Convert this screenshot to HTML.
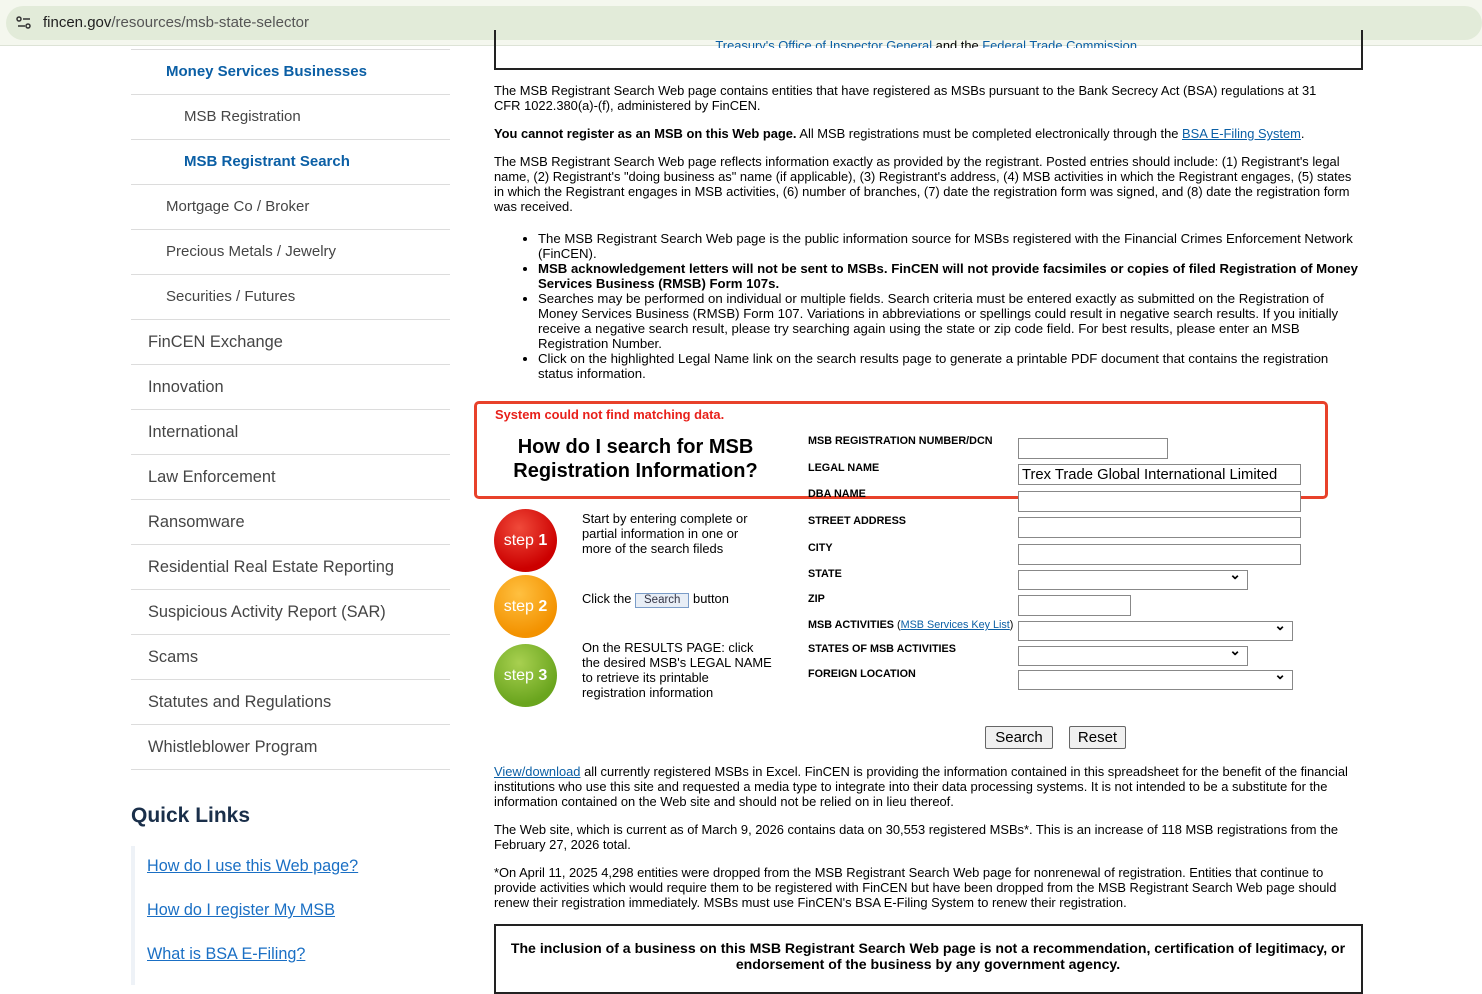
<!DOCTYPE html>
<html><head><meta charset="utf-8"><style>
*{box-sizing:border-box;margin:0;padding:0}
body{width:1482px;height:985px;overflow:hidden;background:#fff;font-family:"Liberation Sans",Arial,sans-serif;position:relative}
.bar{position:absolute;left:0;top:0;width:1482px;height:46px;background:#f4f7ee;border-bottom:1px solid #dde3d6}
.url{position:absolute;left:6px;top:6px;width:1476px;height:34px;background:#e2ebd9;border-radius:17px}
.url span{position:absolute;left:37px;top:8px;font-size:15px;color:#1f1f1f}
.url .ic{position:absolute;left:10px;top:10px}
.side{position:absolute;left:131px;top:49px;width:319px}
.side div{height:45px;border-top:1px solid #dcdcdc;font-size:16.4px;color:#454545;line-height:44px;padding-left:17px}
.side .l2{padding-left:35px;font-size:15px}
.side .l3{padding-left:53px;font-size:15px}
.side .b{color:#0b5fa5;font-weight:bold}
.side div.last{height:1px}
h3{position:absolute;left:131px;top:804px;font-size:21px;color:#1a2f4a;font-weight:bold}
.ql{position:absolute;left:131px;top:846px;border-left:4px solid #eef2f7;height:139px;padding-left:12px}
.ql a{display:block;font-size:16.2px;color:#1a6fc4;text-decoration:underline;margin-top:11px;height:33px}
.main{position:absolute;left:494px;width:868px;font-size:12.9px;line-height:15px;color:#000}
a.u{color:#0b5fa5;text-decoration:underline}
.box{position:absolute;border:2px solid #222}
.red{position:absolute;left:474px;top:401px;width:854px;height:98px;border:3px solid #e8412a;border-radius:5px}
.lab{position:absolute;left:808px;font-size:10.8px;font-weight:bold}
.inp{position:absolute;left:1018px;height:21px;border:1px solid #888;background:#fff}
.sel:after{content:"⌄";position:absolute;right:6px;top:-5px;font-size:14px;font-weight:bold}
.step{position:absolute;left:494px;width:63px;height:63px;border-radius:50%;color:#fff;font-size:16px;line-height:63px;text-align:center}
.st{position:absolute;left:582px;font-size:12.9px;line-height:15px}
.btn{position:absolute;top:726px;height:23px;border:1px solid #666;background:#f0f0f0;font-size:15px;line-height:21px;text-align:center;border-radius:2px}
</style></head><body>
<div class="bar"><div class="url"><svg class="ic" width="16" height="14" viewBox="0 0 16 14"><circle cx="3" cy="3" r="2" fill="none" stroke="#333" stroke-width="1.5"/><line x1="7" y1="3" x2="14" y2="3" stroke="#333" stroke-width="1.5"/><line x1="2" y1="10" x2="9" y2="10" stroke="#333" stroke-width="1.5"/><circle cx="12" cy="10" r="2" fill="none" stroke="#333" stroke-width="1.5"/></svg><span>fincen.gov<span style="position:static;color:#555">/resources/msb-state-selector</span></span></div></div>

<div class="side">
<div class="l2 b">Money Services Businesses</div>
<div class="l3">MSB Registration</div>
<div class="l3 b">MSB Registrant Search</div>
<div class="l2">Mortgage Co / Broker</div>
<div class="l2">Precious Metals / Jewelry</div>
<div class="l2">Securities / Futures</div>
<div>FinCEN Exchange</div>
<div>Innovation</div>
<div>International</div>
<div>Law Enforcement</div>
<div>Ransomware</div>
<div>Residential Real Estate Reporting</div>
<div>Suspicious Activity Report (SAR)</div>
<div>Scams</div>
<div>Statutes and Regulations</div>
<div>Whistleblower Program</div>
<div class="last"></div>
</div>
<h3>Quick Links</h3>
<div class="ql"><a>How do I use this Web page?</a><a>How do I register My MSB</a><a>What is BSA E-Filing?</a></div>

<div class="box" style="left:494px;top:30px;width:869px;height:40px;border-top:none"></div>
<div class="main" style="top:38px;text-align:center;color:#0b5fa5;overflow:hidden;height:10px"><span style="text-decoration:underline">Treasury's Office of Inspector General</span> <span style="color:#000">and the</span> <span style="text-decoration:underline">Federal Trade Commission</span>.</div>

<div class="main" style="top:83px;width:850px">The MSB Registrant Search Web page contains entities that have registered as MSBs pursuant to the Bank Secrecy Act (BSA) regulations at 31 CFR 1022.380(a)-(f), administered by FinCEN.</div>
<div class="main" style="top:126px"><b>You cannot register as an MSB on this Web page.</b> All MSB registrations must be completed electronically through the <a class="u">BSA E-Filing System</a>.</div>
<div class="main" style="top:154px">The MSB Registrant Search Web page reflects information exactly as provided by the registrant. Posted entries should include: (1) Registrant's legal name, (2) Registrant's "doing business as" name (if applicable), (3) Registrant's address, (4) MSB activities in which the Registrant engages, (5) states in which the Registrant engages in MSB activities, (6) number of branches, (7) date the registration form was signed, and (8) date the registration form was received.</div>
<ul class="main" style="top:231px;padding-left:44px;font-size:13.2px">
<li>The MSB Registrant Search Web page is the public information source for MSBs registered with the Financial Crimes Enforcement Network (FinCEN).</li>
<li><b>MSB acknowledgement letters will not be sent to MSBs. FinCEN will not provide facsimiles or copies of filed Registration of Money Services Business (RMSB) Form 107s.</b></li>
<li>Searches may be performed on individual or multiple fields. Search criteria must be entered exactly as submitted on the Registration of Money Services Business (RMSB) Form 107. Variations in abbreviations or spellings could result in negative search results. If you initially receive a negative search result, please try searching again using the state or zip code field. For best results, please enter an MSB Registration Number.</li>
<li>Click on the highlighted Legal Name link on the search results page to generate a printable PDF document that contains the registration status information.</li>
</ul>

<div class="red"></div>
<div style="position:absolute;left:495px;top:407px;color:#e8201a;font-size:12.9px;font-weight:bold">System could not find matching data.</div>
<div style="position:absolute;left:494px;top:435px;width:283px;text-align:center;font-size:20px;font-weight:bold;line-height:24px">How do I search for MSB Registration Information?</div>

<div class="lab" style="top:435px">MSB REGISTRATION NUMBER/DCN</div>
<div class="lab" style="top:462px">LEGAL NAME</div>
<div class="lab" style="top:488px;height:9px;overflow:hidden">DBA NAME</div>
<div class="lab" style="top:515px">STREET ADDRESS</div>
<div class="lab" style="top:542px">CITY</div>
<div class="lab" style="top:568px">STATE</div>
<div class="lab" style="top:593px">ZIP</div>
<div class="lab" style="top:619px">MSB ACTIVITIES <span style="font-weight:normal">(<a class="u">MSB Services Key List</a>)</span></div>
<div class="lab" style="top:643px">STATES OF MSB ACTIVITIES</div>
<div class="lab" style="top:668px">FOREIGN LOCATION</div>

<div class="inp" style="top:438px;width:150px"></div>
<div class="inp" style="top:464px;width:283px;font-size:14.8px;padding-left:3px;line-height:20px">Trex Trade Global International Limited</div>
<div class="inp" style="top:491px;width:283px"></div>
<div class="inp" style="top:517px;width:283px"></div>
<div class="inp" style="top:544px;width:283px"></div>
<div class="inp sel" style="top:570px;width:230px;height:20px"></div>
<div class="inp" style="top:595px;width:113px"></div>
<div class="inp sel" style="top:621px;width:275px;height:20px"></div>
<div class="inp sel" style="top:646px;width:230px;height:20px"></div>
<div class="inp sel" style="top:670px;width:275px;height:20px"></div>

<div class="step" style="top:509px;background:radial-gradient(circle at 40% 30%,#f04a3a,#c00 70%)">step <b>1</b></div>
<div class="step" style="top:575px;background:radial-gradient(circle at 40% 30%,#ffc040,#f39200 70%)">step <b>2</b></div>
<div class="step" style="top:644px;background:radial-gradient(circle at 40% 30%,#a8d050,#6aa51e 70%)">step <b>3</b></div>
<div class="st" style="top:511px">Start by entering complete or<br>partial information in one or<br>more of the search fileds</div>
<div class="st" style="top:591px">Click the <span style="display:inline-block;border:1px solid #7a9cc8;background:#e8eef6;font-size:11.5px;padding:0 8px;line-height:13px;color:#334">Search</span> button</div>
<div class="st" style="top:640px">On the RESULTS PAGE: click<br>the desired MSB's LEGAL NAME<br>to retrieve its printable<br>registration information</div>

<div class="btn" style="left:985px;width:68px">Search</div>
<div class="btn" style="left:1069px;width:57px">Reset</div>

<div class="main" style="top:764px;width:866px"><a class="u">View/download</a> all currently registered MSBs in Excel. FinCEN is providing the information contained in this spreadsheet for the benefit of the financial institutions who use this site and requested a media type to integrate into their data processing systems. It is not intended to be a substitute for the information contained on the Web site and should not be relied on in lieu thereof.</div>
<div class="main" style="top:822px">The Web site, which is current as of March 9, 2026 contains data on 30,553 registered MSBs*. This is an increase of 118 MSB registrations from the February 27, 2026 total.</div>
<div class="main" style="top:865px">*On April 11, 2025 4,298 entities were dropped from the MSB Registrant Search Web page for nonrenewal of registration. Entities that continue to provide activities which would require them to be registered with FinCEN but have been dropped from the MSB Registrant Search Web page should renew their registration immediately. MSBs must use FinCEN's BSA E-Filing System to renew their registration.</div>

<div class="box" style="left:494px;top:924px;width:869px;height:70px"></div>
<div class="main" style="top:940px;text-align:center;font-weight:bold;font-size:14.1px;line-height:16px;padding:0 8px">The inclusion of a business on this MSB Registrant Search Web page is not a recommendation, certification of legitimacy, or endorsement of the business by any government agency.</div>
</body></html>
